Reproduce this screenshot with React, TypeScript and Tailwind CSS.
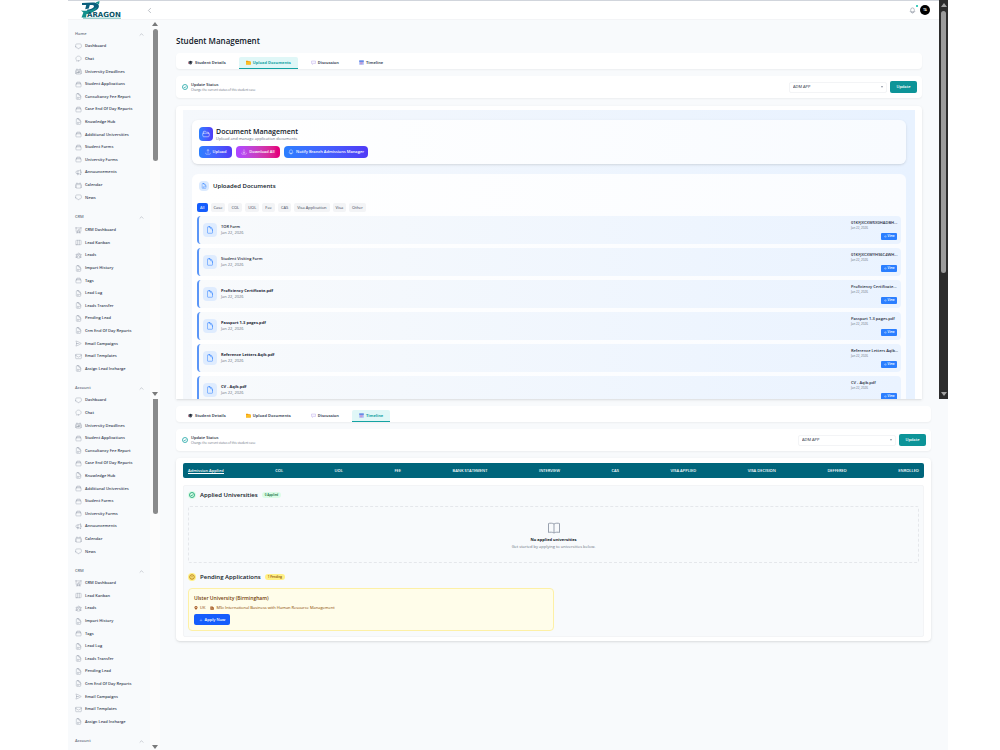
import { useState } from 'react';
import type { ComponentType } from 'react';
import clsx from 'clsx';
import {
    HiOutlineArrowDownTray,
    HiOutlineArrowUpTray,
    HiOutlineBell,
    HiOutlineCalendar,
    HiOutlineCalendarDays,
    HiOutlineChatBubbleBottomCenter,
    HiOutlineChatBubbleOvalLeft,
    HiOutlineChevronLeft,
    HiOutlineChevronUp,
    HiOutlineDocument,
    HiOutlineDocumentText,
    HiOutlineEnvelope,
    HiOutlineEye,
    HiOutlineFolderOpen,
    HiOutlineMegaphone,
    HiOutlinePaperAirplane,
    HiOutlinePresentationChartBar,
    HiOutlineRectangleStack,
    HiOutlineUserGroup,
    HiOutlineViewColumns,
    HiPlus,
} from 'react-icons/hi2';

type Icon = ComponentType<{ className?: string }>;
type NavItem = { label: string; icon: Icon };

const homeItems: NavItem[] = [
    { label: 'Dashboard', icon: HiOutlineChatBubbleBottomCenter },
    { label: 'Chat', icon: HiOutlineChatBubbleOvalLeft },
    { label: 'University Deadlines', icon: HiOutlineCalendarDays },
    { label: 'Student Applications', icon: HiOutlineRectangleStack },
    { label: 'Consultancy Fee Report', icon: HiOutlineDocumentText },
    { label: 'Case End Of Day Reports', icon: HiOutlineRectangleStack },
    { label: 'Knowledge Hub', icon: HiOutlineDocumentText },
    { label: 'Additional Universities', icon: HiOutlineRectangleStack },
    { label: 'Student Forms', icon: HiOutlineRectangleStack },
    { label: 'University Forms', icon: HiOutlineRectangleStack },
    { label: 'Announcements', icon: HiOutlineMegaphone },
    { label: 'Calendar', icon: HiOutlineCalendar },
    { label: 'News', icon: HiOutlineChatBubbleBottomCenter },
];

const crmItems: NavItem[] = [
    { label: 'CRM Dashboard', icon: HiOutlinePresentationChartBar },
    { label: 'Lead Kanban', icon: HiOutlineViewColumns },
    { label: 'Leads', icon: HiOutlineUserGroup },
    { label: 'Import History', icon: HiOutlineDocumentText },
    { label: 'Tags', icon: HiOutlineRectangleStack },
    { label: 'Lead Log', icon: HiOutlineDocumentText },
    { label: 'Leads Transfer', icon: HiOutlineDocumentText },
    { label: 'Pending Lead', icon: HiOutlineDocumentText },
    { label: 'Crm End Of Day Reports', icon: HiOutlineDocumentText },
    { label: 'Email Campaigns', icon: HiOutlinePaperAirplane },
    { label: 'Email Templates', icon: HiOutlineEnvelope },
    { label: 'Assign Lead Incharge', icon: HiOutlineDocumentText },
];

const documents = [
    { name: 'TOR Form', file: '01KFJXCXW5X0HADBH...', bold: false },
    { name: 'Student Visiting Form', file: '01KFJXCXWYHS6C4WH...', bold: false },
    { name: 'Proficiency Certificate.pdf', file: 'Proficiency Certificate...', bold: true },
    { name: 'Passport 1-3 pages.pdf', file: 'Passport 1-3 pages.pdf', bold: true },
    { name: 'Reference Letters Aqib.pdf', file: 'Reference Letters Aqib...', bold: true },
    { name: 'CV - Aqib.pdf', file: 'CV - Aqib.pdf', bold: true },
];

const filters = ['All', 'Case', 'COL', 'UOL', 'Fee', 'CAS', 'Visa Application', 'Visa', 'Other'];

const stages = [
    'Admission Applied', 'COL', 'UOL', 'FEE', 'BANK STATEMENT', 'INTERVIEW',
    'CAS', 'VISA APPLIED', 'VISA DECISION', 'DEFFERED', 'ENROLLED',
];

const Logo = () => (
    <svg viewBox="0 0 42 18" className="h-[18px] w-[42px]" role="img" aria-label="Paragon">
        <path d="M1 2 L11 1.5 C17 1.4 19 4 17.4 7 C15.8 9.8 11.5 11 6.5 11.4 L6 8.8 C10 8.2 12.8 7 13 5.4 C13.2 4.2 11.8 4 9.8 4 L8.8 4 L7.8 7.6 L4.2 8.2 L5.2 4 L1 4 Z" fill="#0b5f7d" />
        <path d="M0 9.4 C6 10.6 11 9.4 16 6 C14 11 8.5 13 5.5 13 L5 16.6 L0.5 16.6 L2.4 11.4 Z" fill="#12908c" />
        <path d="M14.5 1.4 L18.5 0 L18 3.6 Z" fill="#12908c" />
        <text x="6" y="16" fontFamily="'DejaVu Sans', sans-serif" fontWeight="700" fontSize="7" fill="#0b5468">ARAGON</text>
        <path d="M2 17.2 H40" stroke="#12908c" strokeWidth="0.6" />
    </svg>
);

/* Tab glyphs */
const CapIcon = () => (
    <svg viewBox="0 0 10 10" className="size-[5px]">
        <path d="M0 4 L5 1.5 L10 4 L5 6.5 Z" fill="#1f2937" />
        <path d="M2.3 5 V8 Q5 9.5 7.7 8 V5 L5 6.5 Z" fill="#374151" />
        <path d="M1 4 V8" stroke="#b45368" strokeWidth="1.2" />
    </svg>
);

const FolderIcon = () => (
    <svg viewBox="0 0 10 10" className="size-[5px]">
        <path d="M0 1.5 H4 L5 2.6 H9.2 V9 H0 Z" fill="#f59e0b" />
        <path d="M0 4 H10 V9 H0 Z" fill="#fbbf24" />
    </svg>
);

const BubbleIcon = () => (
    <svg viewBox="0 0 10 10" className="size-[5px]">
        <path d="M1 2 H9 V7 H5 L3 9 V7 H1 Z" fill="#f5f3ff" stroke="#c4b5e8" />
    </svg>
);

const DateIcon = () => (
    <svg viewBox="0 0 10 10" className="size-[5px]">
        <path d="M0.5 1 H9.5 V9.5 H0.5 Z" fill="#a9b8f5" />
        <path d="M0.5 1 H9.5 V3.5 H0.5 Z" fill="#4f7be0" />
        <path d="M2.5 5.5 H7.5 M2.5 7.5 H6" stroke="#e879a8" />
    </svg>
);

const CheckRing = ({ className }: { className?: string }) => (
    <svg viewBox="0 0 12 12" className={clsx('size-[6px]', className)} fill="none" stroke="currentColor" strokeWidth="1.5">
        <circle cx="6" cy="6" r="5" />
        <path d="M3.8 6.2 L5.4 7.8 L8.2 4.6" />
    </svg>
);

const AlertRing = ({ className }: { className?: string }) => (
    <svg viewBox="0 0 12 12" className={clsx('size-[6px]', className)} fill="none" stroke="currentColor" strokeWidth="1.4">
        <circle cx="6" cy="6" r="4.6" />
        <path d="M6 3.4 V6.6 M6 7.6 V8.8" />
    </svg>
);

const BookIcon = () => (
    <svg viewBox="0 0 14 12" className="h-3 w-[14px] text-gray-400" fill="none" stroke="currentColor" strokeWidth="1">
        <path d="M7 2 C5.5 1 3 1 1.5 1.5 V10.5 C3 10 5.5 10 7 11 C8.5 10 11 10 12.5 10.5 V1.5 C11 1 8.5 1 7 2 Z" />
        <path d="M7 2 V11" />
    </svg>
);

const tabs = [
    { label: 'Student Details', icon: CapIcon },
    { label: 'Upload Documents', icon: FolderIcon },
    { label: 'Discussion', icon: BubbleIcon },
    { label: 'Timeline', icon: DateIcon },
];

const Arrow = ({ down = false, className = 'h-1 w-1.5' }: { down?: boolean; className?: string }) => (
    <svg viewBox="0 0 6 4" className={clsx('shrink-0', className)}>
        <path d={down ? 'M0 0 H6 L3 4 Z' : 'M0 4 H6 L3 0 Z'} fill="currentColor" />
    </svg>
);

const NavHeading = ({ label }: { label: string }) => (
    <button className="flex h-3 w-full shrink-0 items-center justify-between pl-[7px] pr-[6px] text-[4px] font-semibold text-gray-500">
        <span>{label}</span>
        <HiOutlineChevronUp className="size-[5px] text-gray-500" />
    </button>
);

const NavList = ({ items, className }: { items: NavItem[]; className: string }) => (
    <ul className={clsx('grid shrink-0 auto-rows-fr', className)}>
        {items.map(({ label, icon: ItemIcon }) => (
            <li key={label} className="flex">
                <a href="#" className="flex items-center gap-[3px] pl-[7px] text-[4px] font-semibold text-gray-700">
                    <ItemIcon className="size-[7px] text-gray-400" />
                    <span>{label}</span>
                </a>
            </li>
        ))}
    </ul>
);

const Tabs = ({ initial }: { initial: string }) => {
    const [active, setActive] = useState(initial);

    return (
        <div role="tablist" className="flex h-4 items-end gap-[6px] rounded-sm bg-white px-[5px] shadow-xs">
            {tabs.map(({ label, icon: TabIcon }) => (
                <button
                    key={label}
                    role="tab"
                    aria-selected={active === label}
                    onClick={() => setActive(label)}
                    className={clsx(
                        'flex h-3 items-center gap-[2px] border-b px-[7px] text-[4px] font-bold',
                        active === label ? 'rounded-t-xs border-[#14a3a3] bg-[#e0f7f7] text-[#14a3a3]' : 'border-transparent text-gray-600',
                    )}
                >
                    <TabIcon />
                    <span>{label}</span>
                </button>
            ))}
        </div>
    );
};

const StatusCard = ({ id }: { id: string }) => (
    <div className="flex h-[22px] items-center rounded-sm bg-white pl-[6px] pr-[5px] shadow-xs">
        <CheckRing className="text-[#0d9f9f]" />
        <div className="ml-[3px] flex-1">
            <label htmlFor={id} className="block text-[4px] leading-[6px] font-semibold text-gray-800">Update Status</label>
            <p className="text-[3px] leading-[5px] text-gray-500">Change the current status of this student case</p>
        </div>
        <div className="grid w-[98px] items-center">
            <select id={id} className="col-start-1 row-start-1 h-[11px] appearance-none rounded-xs border border-gray-100 bg-white px-[3px] text-[4px] font-medium text-gray-800">
                <option>ADM APP</option>
            </select>
            <Arrow down className="pointer-events-none col-start-1 row-start-1 mr-1 h-[2px] w-[2px] justify-self-end text-gray-500" />
        </div>
        <button className="ml-[3px] h-3 w-[27px] rounded-xs bg-[#0d9498] text-[4px] font-semibold text-white">Update</button>
    </div>
);

const DocumentRow = ({ name, file, bold }: { name: string; file: string; bold: boolean }) => (
    <li className="flex h-7 shrink-0 items-center rounded-sm border-l-2 border-[#5b96f7] bg-gradient-to-r from-[#f8fafc] to-[#eaf3ff] pl-1 pr-1">
        <div className="flex size-[14px] items-center justify-center rounded-sm bg-[#dfecfe]">
            <HiOutlineDocument className="size-2 text-blue-500" />
        </div>
        <div className="ml-1 flex-1">
            <p className={clsx('text-[4px] leading-[6px] text-gray-800', bold ? 'font-bold' : 'font-semibold')}>{name}</p>
            <p className="text-[4px] leading-[6px] text-gray-500">Jan 22, 2026</p>
        </div>
        <div className="flex w-[46px] flex-col">
            <p className="text-[4px] leading-[6px] font-semibold whitespace-nowrap text-gray-800">{file}</p>
            <p className="text-[3px] leading-1 text-gray-500">Jan 22, 2026</p>
            <button className="mt-[3px] flex h-[7px] w-4 items-center justify-center gap-px self-end rounded-[1px] bg-blue-500 text-[3px] font-semibold text-white">
                <HiOutlineEye className="size-[3px]" />
                View
            </button>
        </div>
    </li>
);

const DocumentsPanel = () => {
    const [filter, setFilter] = useState('All');

    return (
        <div className="mt-2 min-h-0 flex-1 overflow-hidden rounded-t-sm bg-white px-[7px] pt-1 shadow-sm">
            <div className="bg-gradient-to-r from-[#f5f8fc] to-[#e8f2ff] px-[9px] pt-[10px]">
                <section className="h-11 rounded-md bg-gradient-to-r from-white to-[#f8fbff] px-[7px] pt-[7px] shadow-sm">
                    <div className="flex items-center gap-[3px]">
                        <div className="flex size-[14px] items-center justify-center rounded-sm bg-gradient-to-r from-blue-500 to-indigo-600">
                            <HiOutlineFolderOpen className="size-2 text-white" />
                        </div>
                        <div>
                            <h2 className="text-[7px] leading-[9px] font-semibold text-gray-900">Document Management</h2>
                            <p className="text-[4px] leading-[5px] text-gray-500">Upload and manage application documents</p>
                        </div>
                    </div>
                    <div className="mt-[5px] flex gap-1 text-[4px] font-semibold text-white">
                        <button className="flex h-3 w-[33px] items-center justify-center gap-[2px] rounded-sm bg-gradient-to-r from-blue-500 to-indigo-600">
                            <HiOutlineArrowUpTray className="size-[6px]" />
                            Upload
                        </button>
                        <button className="flex h-3 w-11 items-center justify-center gap-[2px] rounded-sm bg-gradient-to-r from-purple-500 to-pink-600">
                            <HiOutlineArrowDownTray className="size-[6px]" />
                            Download All
                        </button>
                        <button className="flex h-3 w-[84px] items-center justify-center gap-[2px] rounded-sm bg-gradient-to-r from-blue-500 to-indigo-600">
                            <HiOutlineBell className="size-[6px]" />
                            Notify Branch Admissions Manager
                        </button>
                    </div>
                </section>

                <section className="mt-[10px] rounded-md bg-gradient-to-r from-white to-[#fafcff] px-[5px] pt-[7px]">
                    <div className="flex items-center gap-1 pl-[2px]">
                        <div className="flex size-[10px] items-center justify-center rounded-sm bg-blue-100">
                            <HiOutlineDocumentText className="size-[6px] text-blue-500" />
                        </div>
                        <h3 className="text-[6px] leading-[10px] font-semibold text-gray-900">Uploaded Documents</h3>
                    </div>
                    <div className="mt-3 flex gap-[3px]">
                        {filters.map((item) => (
                            <button
                                key={item}
                                onClick={() => setFilter(item)}
                                className={clsx(
                                    'h-[9px] rounded-xs px-[3px] text-[4px] font-medium',
                                    filter === item ? 'bg-blue-600 text-white' : 'bg-gray-100 text-gray-700',
                                )}
                            >
                                {item}
                            </button>
                        ))}
                    </div>
                    <ul className="mt-1 flex flex-col gap-1">
                        {documents.map((doc) => (
                            <DocumentRow key={doc.name} {...doc} />
                        ))}
                    </ul>
                </section>
            </div>
        </div>
    );
};

const TimelinePanel = () => (
    <div className="mt-[7px] rounded-sm bg-white px-[7px] pt-[5px] pb-1 shadow-sm">
        <div className="flex h-[15px] items-center justify-between rounded-xs bg-[#00657b] px-[5px] text-[4px] leading-[5px] font-semibold text-white">
            {stages.map((stage, i) => (
                <button key={stage} className={clsx(i === 0 && 'border-b border-white')}>{stage}</button>
            ))}
        </div>

        <div className="mt-[7px] rounded-xs border border-gray-100 bg-[#f8fafc] px-1 pt-[5px] pb-1">
            <div className="flex h-2 items-center gap-1">
                <span className="flex size-2 items-center justify-center rounded-full bg-green-100">
                    <CheckRing className="text-emerald-600" />
                </span>
                <h3 className="text-[6px] font-semibold text-gray-900">Applied Universities</h3>
                <span className="rounded-full bg-green-100 px-[3px] text-[3px] leading-[6px] font-semibold text-green-800">0 Applied</span>
            </div>
            <div className="mt-[7px] flex h-[57px] flex-col items-center rounded-xs border border-dashed border-gray-200 pt-[15px]">
                <BookIcon />
                <p className="mt-[3px] text-[4px] leading-[6px] font-bold text-gray-900">No applied universities</p>
                <p className="mt-px text-[4px] leading-[6px] text-gray-500">Get started by applying to universities below.</p>
            </div>

            <div className="mt-[10px] flex h-2 items-center gap-1">
                <span className="flex size-2 items-center justify-center rounded-full bg-yellow-200">
                    <AlertRing className="text-yellow-700" />
                </span>
                <h3 className="text-[6px] font-semibold text-gray-900">Pending Applications</h3>
                <span className="rounded-full bg-yellow-200 px-[3px] text-[3px] leading-[6px] font-semibold text-yellow-800">1 Pending</span>
            </div>
            <div className="mt-[7px] mb-px h-[43px] w-1/2 rounded-sm border border-[#fdf0a6] bg-[#fffdea] px-[5px] pt-[6px]">
                <h4 className="text-[5px] leading-[7px] font-semibold text-yellow-900">Ulster University (Birmingham)</h4>
                <div className="mt-[3px] flex h-[5px] items-center gap-[2px] text-[4px] text-yellow-800">
                    <svg viewBox="0 0 10 10" className="size-1">
                        <path d="M5 0 A4 4 0 0 1 9 4 C9 6 6.5 8 5 10 C3.5 8 1 6 1 4 A4 4 0 0 1 5 0 Z M5 2.5 A1.5 1.5 0 1 0 5 5.5 A1.5 1.5 0 1 0 5 2.5 Z" fill="#a3541c" fillRule="evenodd" />
                    </svg>
                    <span>UK</span>
                    <svg viewBox="0 0 10 10" className="ml-[3px] size-1">
                        <path d="M1 1 H7 V3 H9.5 V9.5 H1 Z M2.5 3 V4 H5.5 V3 Z M2.5 6 V7 H7.5 V6 Z" fill="#a3541c" fillRule="evenodd" />
                    </svg>
                    <span>MSc International Business with Human Resource Management</span>
                </div>
                <button className="mt-1 flex h-[11px] w-9 items-center justify-center gap-[2px] rounded-xs bg-blue-600 text-[4px] font-semibold text-white">
                    <HiPlus className="size-1" />
                    Apply Now
                </button>
            </div>
        </div>
    </div>
);

const DocumentsScreen = () => (
    <div className="flex h-[399px]">
        <div className="flex min-w-0 flex-1 flex-col">
            <header className="flex h-5 shrink-0 items-center border-t border-b border-t-gray-300 border-b-gray-100 bg-white pl-[13px] pr-[9px]">
                <Logo />
                <button aria-label="Collapse sidebar" className="ml-[23px]">
                    <HiOutlineChevronLeft className="size-[7px] text-gray-500" />
                </button>
                <div className="ml-auto flex items-center gap-1">
                    <button aria-label="Notifications" className="relative">
                        <HiOutlineBell className="size-[7px] text-gray-500" />
                        <span className="absolute -top-[2px] -right-[2px] size-[2px] rounded-full bg-teal-500" />
                    </button>
                    <span className="flex size-[10px] items-center justify-center rounded-full bg-black text-[3px] font-semibold text-white">TA</span>
                </div>
            </header>
            <div className="flex min-h-0 flex-1">
                <aside className="flex w-[92px] shrink-0">
                    <nav className="flex flex-1 flex-col overflow-hidden pt-2">
                        <NavHeading label="Home" />
                        <NavList items={homeItems} className="h-[164px]" />
                        <div className="mt-[7px]"><NavHeading label="CRM" /></div>
                        <NavList items={crmItems} className="mt-px h-[151px]" />
                        <div className="mt-[7px]"><NavHeading label="Account" /></div>
                    </nav>
                    <div className="flex w-[10px] flex-col items-center bg-[#fcfcfc] pt-[2px] text-[#7a7a7a]">
                        <Arrow />
                        <div className="mt-[3px] h-[132px] w-[5px] rounded-full bg-[#8b8b8b]" />
                        <Arrow down className="mt-auto mb-[3px] h-1 w-1.5" />
                    </div>
                </aside>
                <main className="flex min-w-0 flex-1 flex-col pr-[17px] pl-4 pt-[15px]">
                    <h1 className="text-[8px] leading-3 font-semibold text-gray-900">Student Management</h1>
                    <div className="mt-[6px]"><Tabs initial="Upload Documents" /></div>
                    <div className="mt-[7px]"><StatusCard id="documents-status" /></div>
                    <DocumentsPanel />
                </main>
            </div>
        </div>
        <div className="flex w-[9px] shrink-0 flex-col items-center bg-[#2c2c2c] pt-[3px] text-[#a3a3a3]">
            <Arrow />
            <div className="mt-1 h-[262px] w-[5px] rounded-full bg-[#9b9b9b]" />
            <Arrow down className="mt-auto mb-[3px] h-1 w-1.5" />
        </div>
    </div>
);

const TimelineScreen = () => (
    <div className="flex h-[351px]">
        <aside className="flex w-[92px] shrink-0">
            <nav className="flex flex-1 flex-col justify-end pb-[3px]">
                <NavList items={homeItems} className="h-[164px]" />
                <div className="mt-[7px]"><NavHeading label="CRM" /></div>
                <NavList items={crmItems} className="h-[151px]" />
                <div className="mt-[7px]"><NavHeading label="Account" /></div>
            </nav>
            <div className="flex w-[10px] flex-col items-center bg-[#fcfcfc] text-[#7a7a7a]">
                <div className="h-[115px] w-[5px] rounded-b-full bg-[#8b8b8b]" />
                <Arrow down className="mt-auto mb-px h-1 w-1.5" />
            </div>
        </aside>
        <main className="min-w-0 flex-1 pr-[17px] pl-4 pt-[7px]">
            <Tabs initial="Timeline" />
            <div className="mt-[7px]"><StatusCard id="timeline-status" /></div>
            <TimelinePanel />
        </main>
    </div>
);

export default function App() {
    return (
        <div className="bg-white pr-[52px] pl-[68px] font-['Open_Sans','Noto_Sans',sans-serif]">
            <div className="bg-[#f8fafc]">
                <DocumentsScreen />
                <TimelineScreen />
            </div>
        </div>
    );
}
